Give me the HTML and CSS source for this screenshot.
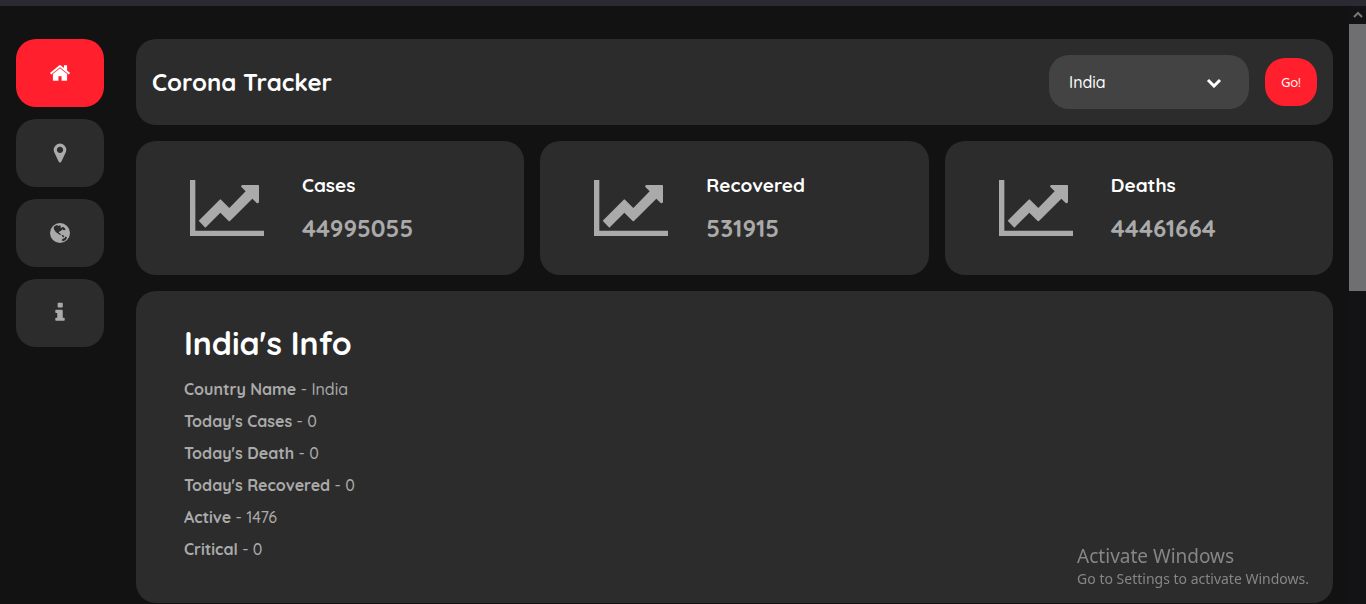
FILE: index.html
```html
<!DOCTYPE html>
<html lang="en">
<head>
<meta charset="utf-8">
<meta name="viewport" content="width=device-width, initial-scale=1">
<title>Corona Tracker</title>
<link rel="stylesheet" href="styles.css">
</head>
<body>
<svg class="defs" width="0" height="0" aria-hidden="true">
  <symbol id="chart" viewBox="162 120 222 168">
    <path d="M162 120h16v152h206v16H162zM188 242L251 179Q253 177 255 179L280 204L329 154L316 141Q314 136 319 135H367Q369 135 369 137V186Q367 191 362 189L349 176L282 243Q280 245 278 243L253 218L208 263z"/>
  </symbol>
</svg>
<div class="window-edge"></div>
<div class="shell">
  <nav class="sidebar" aria-label="Main">
    <a class="nav-link active" href="#home" aria-label="Home">
      <svg class="nav-icon" viewBox="0 0 1792 1792"><path d="M1472 992v480q0 26-19 45t-45 19h-384v-384h-256v384h-384q-26 0-45-19t-19-45v-480q0-1 .5-3t.5-3l575-474 575 474q1 2 1 6zm223-69l-62 74q-8 9-21 11h-3q-13 0-21-7l-692-577-692 577q-12 8-24 7-13-2-21-11l-62-74q-8-10-7-23.5t11-21.5l719-599q32-26 76-26t76 26l244 204v-195q0-14 9-23t23-9h192q14 0 23 9t9 23v408l219 182q10 8 11 21.5t-7 23.5z"/></svg>
    </a>
    <a class="nav-link" href="#country" aria-label="Country">
      <svg class="nav-icon" viewBox="0 0 1792 1792"><path d="M1152 640q0-106-75-181t-181-75-181 75-75 181 75 181 181 75 181-75 75-181zm256 0q0 109-33 179l-364 774q-16 33-47.5 52t-67.5 19-67.5-19-46.5-52l-365-774q-33-70-33-179 0-212 150-362t362-150 362 150 150 362z"/></svg>
    </a>
    <a class="nav-link" href="#world" aria-label="World">
      <svg class="nav-icon" viewBox="0 0 66 66"><path fill-rule="evenodd" d="M33 3a30 30 0 1 0 0 60a30 30 0 0 0 0-60zM16 13L24 9L29 12L33 10L36 13L33 16L38 17L42 14L47 18L50 24L44 25L40 22L36 27L32 28L29 32L33 34L36 38L33 39L28 35L21 31L16 24L14 18zM38 38L43 40L46 44L43 46L39 43zM41 50L47 48L50 43L54 47L50 54L42 58L38 55z"/></svg>
    </a>
    <a class="nav-link" href="#about" aria-label="About">
      <svg class="nav-icon" viewBox="0 0 1792 1792"><path d="M1280 1344v128q0 64-64 64h-640q-64 0-64-64v-128q0-64 64-64h96v-384h-96q-64 0-64-64v-128q0-64 64-64h480q64 0 64 64v576h96q64 0 64 64zm-160-1216v256q0 64-64 64h-288q-64 0-64-64v-256q0-64 64-64h288q64 0 64 64z"/></svg>
    </a>
  </nav>
  <main class="content">
    <header class="panel topbar">
      <h1 class="brand">Corona Tracker</h1>
      <form class="picker">
        <div class="select-wrap">
          <select class="country" aria-label="Country"><option>India</option></select>
          <svg class="chevron" viewBox="0 0 16 10"><path d="M2 2L8 8L14 2"/></svg>
        </div>
        <button class="go" type="button">Go!</button>
      </form>
    </header>
    <section class="stats">
      <article class="panel stat">
        <svg class="stat-icon"><use href="#chart"/></svg>
        <div><h2 class="stat-name">Cases</h2><p class="stat-value">44995055</p></div>
      </article>
      <article class="panel stat">
        <svg class="stat-icon"><use href="#chart"/></svg>
        <div><h2 class="stat-name">Recovered</h2><p class="stat-value">531915</p></div>
      </article>
      <article class="panel stat">
        <svg class="stat-icon"><use href="#chart"/></svg>
        <div><h2 class="stat-name">Deaths</h2><p class="stat-value">44461664</p></div>
      </article>
    </section>
    <section class="panel info">
      <h2 class="info-title">India's Info</h2>
      <p class="info-row"><b>Country Name</b> - India</p>
      <p class="info-row"><b>Today's Cases</b> - 0</p>
      <p class="info-row"><b>Today's Death</b> - 0</p>
      <p class="info-row"><b>Today's Recovered</b> - 0</p>
      <p class="info-row"><b>Active</b> - 1476</p>
      <p class="info-row"><b>Critical</b> - 0</p>
    </section>
  </main>
  <div class="scrollbar" aria-hidden="true">
    <svg class="scroll-up" viewBox="0 0 17 18"><path d="M5 11L9 7L13 11"/></svg>
    <div class="thumb"></div>
  </div>
</div>
<aside class="watermark">
  <p class="watermark-title">Activate Windows</p>
  <p class="watermark-text">Go to Settings to activate Windows.</p>
</aside>
</body>
</html>
```
FILE: styles.css
```css
* {
  box-sizing: border-box;
  margin: 0;
}

body {
  background: #121212;
  color: #aaa;
  font-family: Quicksand, Lato, sans-serif;
  font-size: 16px;
  font-weight: 500;
}

.defs {
  position: absolute;
}

.window-edge {
  height: 6px;
  background: #2b2a33;
}

.shell {
  display: flex;
}

.sidebar {
  display: flex;
  flex-direction: column;
  gap: 12px;
  padding: 33px 16px 0;
}

.nav-link {
  display: flex;
  align-items: center;
  justify-content: center;
  width: 88px;
  height: 68px;
  border-radius: 20px;
  background: #2c2c2c;
  color: #aaa;
}

.nav-link.active {
  background: #ff1f2d;
  color: #fff;
}

.nav-icon {
  width: 22px;
  height: 22px;
  fill: currentColor;
}

.content {
  flex: 1;
  display: flex;
  flex-direction: column;
  gap: 16px;
  min-width: 0;
  padding: 33px 16px 1px;
}

.panel {
  border-radius: 20px;
  background: #2c2c2c;
}

.topbar {
  display: flex;
  align-items: center;
  justify-content: space-between;
  padding: 16px;
}

.brand {
  color: #fff;
  font-size: 24px;
  line-height: 32px;
}

.picker {
  display: flex;
  align-items: center;
  gap: 16px;
}

.select-wrap {
  position: relative;
}

.country {
  display: block;
  appearance: none;
  width: 200px;
  height: 54px;
  padding: 0 20px;
  border: 0;
  border-radius: 20px;
  background: #434343;
  color: #fff;
  font: inherit;
}

.chevron {
  position: absolute;
  top: 23px;
  right: 27px;
  width: 16px;
  height: 10px;
  pointer-events: none;
  fill: none;
  stroke: #fff;
  stroke-width: 3;
}

.go {
  width: 52px;
  height: 48px;
  padding: 0;
  border: 0;
  border-radius: 20px;
  background: #ff1f2d;
  color: #fff;
  font-family: inherit;
  font-size: 13px;
  font-weight: 500;
}

.stats {
  display: grid;
  grid-template-columns: repeat(3, 1fr);
  gap: 16px;
}

.stat {
  display: flex;
  gap: 38px;
  padding: 32px 54px 31px;
}

.stat-icon {
  flex: none;
  width: 74px;
  height: 56px;
  margin-top: 7px;
  fill: #aaa;
}

.stat-name {
  color: #fff;
  font-size: 19px;
  line-height: 24px;
}

.stat-value {
  margin-top: 16px;
  font-size: 24px;
  font-weight: 700;
  line-height: 31px;
}

.info {
  padding: 32px 48px 38px;
}

.info-title {
  margin-bottom: 10px;
  color: #fff;
  font-size: 32px;
  line-height: 40px;
}

.info-row {
  line-height: 32px;
}

.scrollbar {
  width: 17px;
  background: #131315;
}

.scroll-up {
  display: block;
  width: 17px;
  height: 18px;
  fill: none;
  stroke: #77777a;
  stroke-width: 2;
}

.thumb {
  height: 267px;
  background: #6f6f71;
}

.watermark {
  position: fixed;
  right: 57px;
  bottom: 15px;
  color: #868686;
  font-family: "Segoe UI", "Noto Sans", sans-serif;
  font-weight: 400;
}

.watermark-title {
  font-size: 19px;
  line-height: 26px;
}

.watermark-text {
  font-size: 14px;
  line-height: 20px;
}
```
